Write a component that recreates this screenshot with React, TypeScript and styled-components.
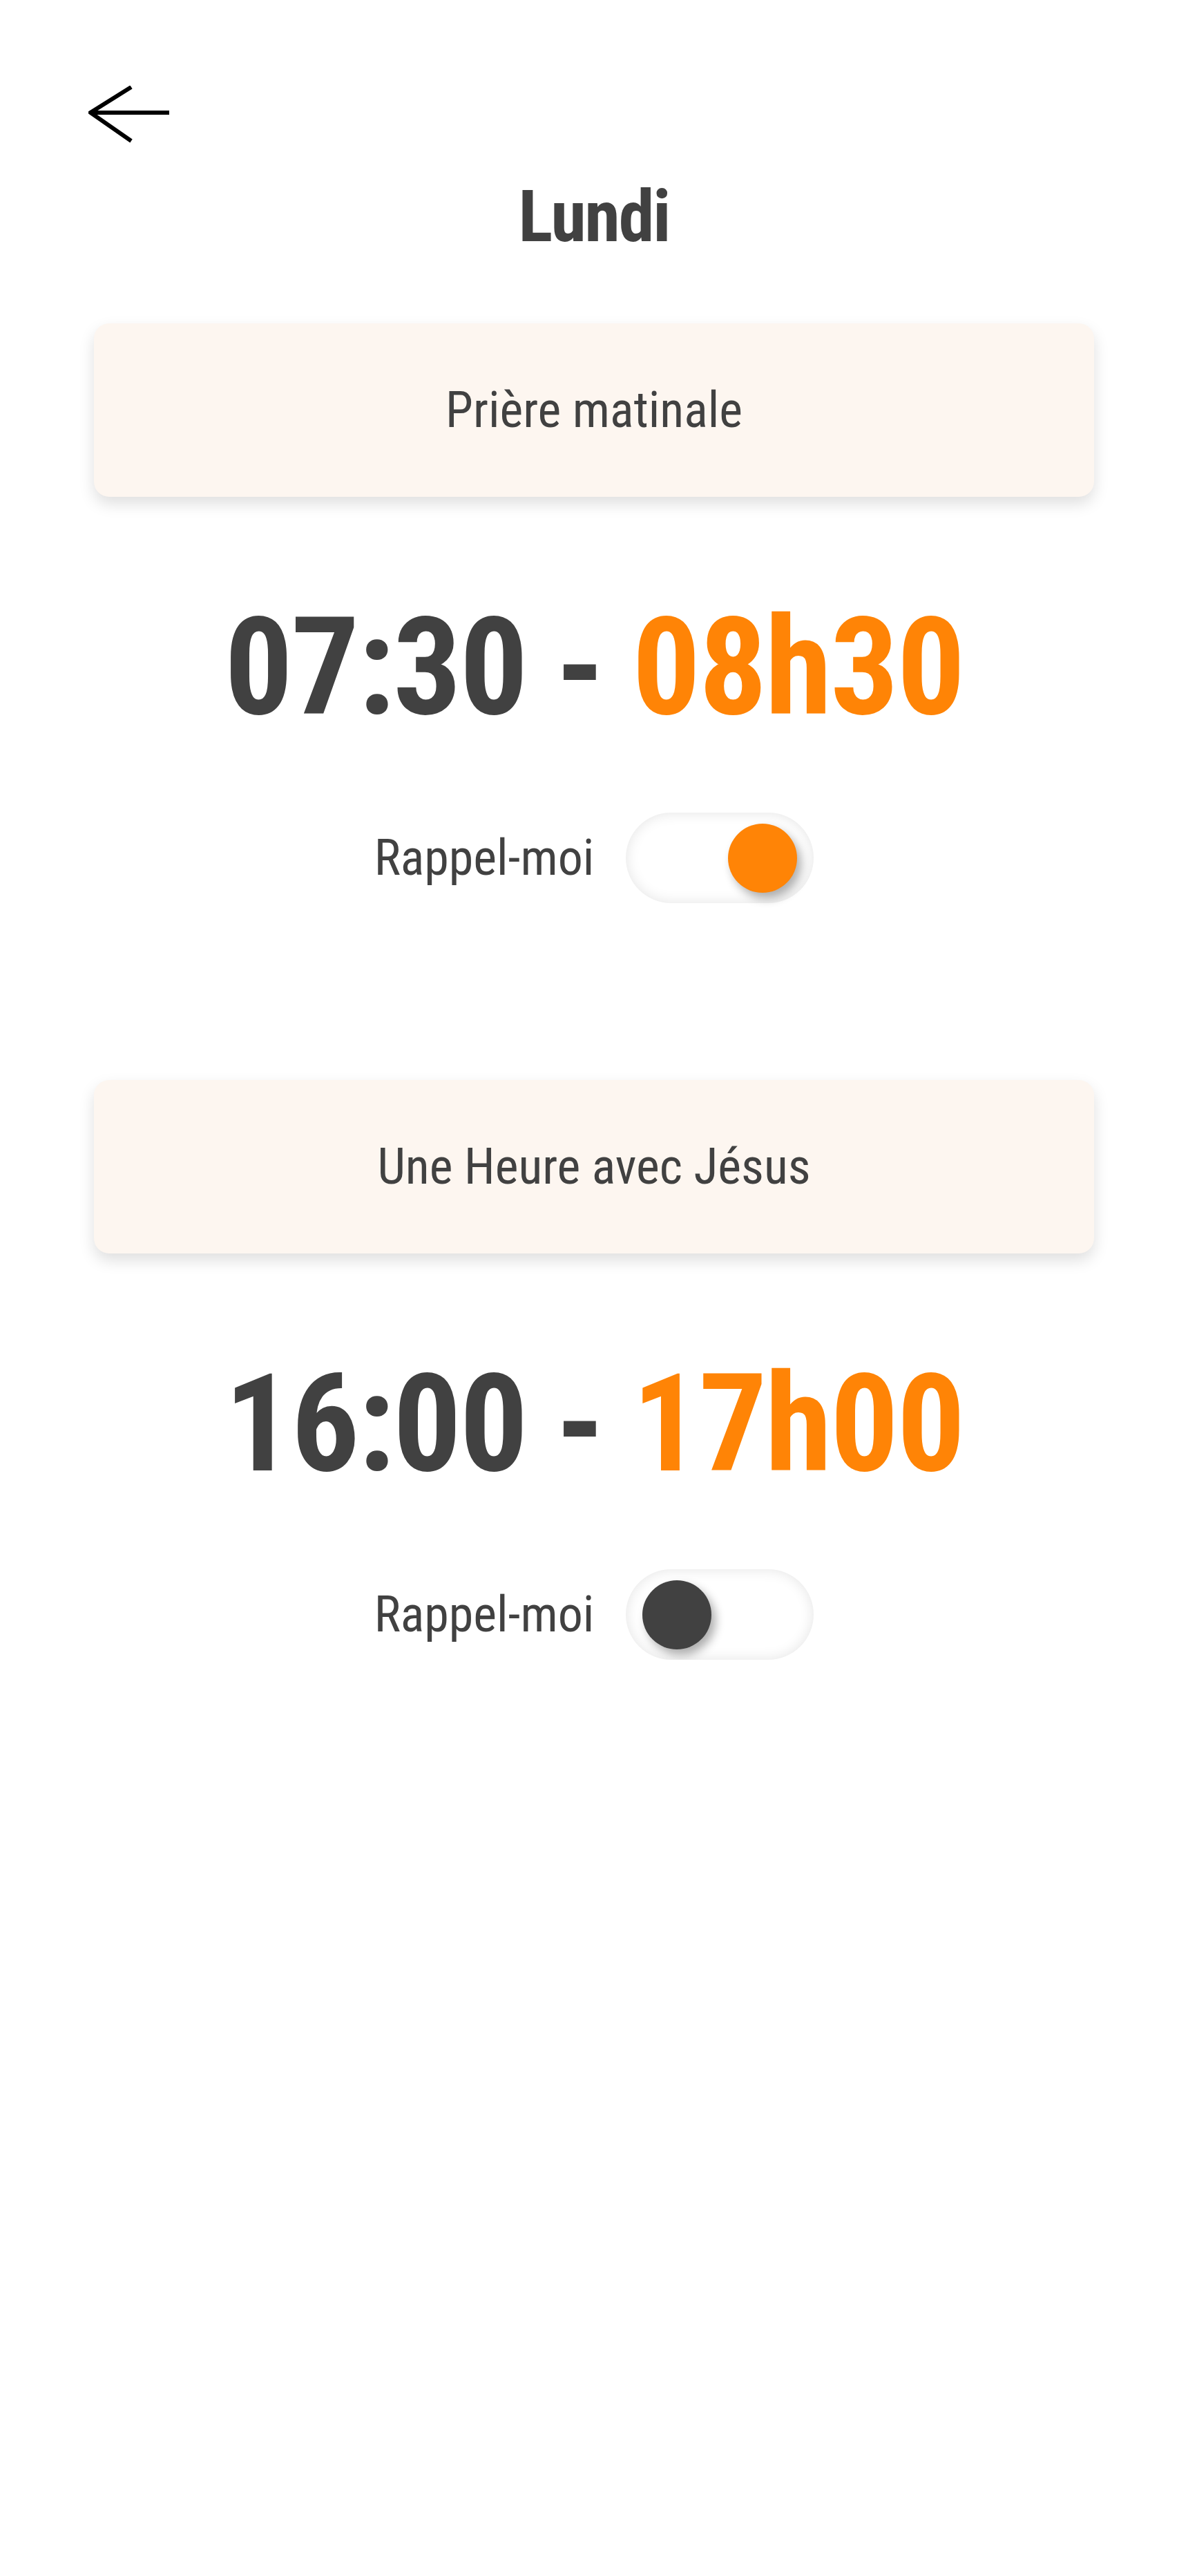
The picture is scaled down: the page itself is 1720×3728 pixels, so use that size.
import React, { useState } from 'react';
import styled, { createGlobalStyle } from 'styled-components';

const colors = {
    text: '#414141',
    orange: '#ff8406',
    card: '#fdf6f0',
    white: '#ffffff',
};

const GlobalStyle = createGlobalStyle`
    html, body {
        margin: 0;
        padding: 0;
        background: ${colors.white};
        font-family: Roboto, "Noto Sans", sans-serif;
        font-stretch: 85%;
        color: ${colors.text};
    }
`;

const Page = styled.div`
    padding-top: 124px;
    display: flex;
    flex-direction: column;
`;

const Header = styled.header`
    padding-left: 128px;
    height: 84px;
`;

const BackButton = styled.button`
    border: none;
    background: none;
    padding: 0;
    width: 120px;
    height: 84px;
    cursor: pointer;
    display: block;
`;

const Title = styled.h1`
    margin: 54px 0 0;
    text-align: center;
    font-size: 104px;
    line-height: 104px;
    font-weight: 700;
    letter-spacing: -2px;
    color: ${colors.text};
`;

const Sessions = styled.div`
    margin-top: 102px;
    padding: 0 136px;
    display: flex;
    flex-direction: column;
    gap: 256px;
`;

const Session = styled.section`
    display: flex;
    flex-direction: column;
    align-items: center;
`;

const Card = styled.div`
    align-self: stretch;
    height: 251px;
    border-radius: 22px;
    background: ${colors.card};
    box-shadow: 0 10px 22px rgba(0, 0, 0, 0.13);
    display: flex;
    align-items: center;
    justify-content: center;
    font-size: 72px;
    line-height: 72px;
    color: ${colors.text};
`;

const Time = styled.div`
    margin-top: 149px;
    font-size: 196px;
    line-height: 196px;
    font-weight: 700;
    letter-spacing: -2.6px;
    color: ${colors.text};
    white-space: pre;
`;

const End = styled.span`
    color: ${colors.orange};
`;

const ReminderRow = styled.div`
    margin-top: 112px;
    display: flex;
    align-items: center;
    gap: 46px;
`;

const Label = styled.span`
    font-size: 72px;
    line-height: 72px;
    color: ${colors.text};
`;

const Track = styled.button`
    position: relative;
    width: 272px;
    height: 131px;
    border: none;
    padding: 0;
    border-radius: 66px;
    background: ${colors.white};
    box-shadow: inset 0 0 20px rgba(0, 0, 0, 0.11);
    cursor: pointer;
`;

const Knob = styled.span<{ on: boolean }>`
    position: absolute;
    top: 16px;
    left: ${(props) => (props.on ? '148px' : '24px')};
    width: 100px;
    height: 100px;
    border-radius: 50%;
    background: ${(props) => (props.on ? colors.orange : colors.text)};
    box-shadow: 6px 8px 14px rgba(0, 0, 0, 0.32);
    transition: left 0.2s;
`;

interface SessionProps {
    name: string;
    start: string;
    end: string;
    reminder: boolean;
}

const ArrowBack: React.FC = () => (
    <svg width="120" height="84" viewBox="0 0 120 84">
        <polyline points="62,2 3,39 62,80" fill="none" stroke="#000" strokeWidth="6" />
        <line x1="4" y1="39" x2="117" y2="39" stroke="#000" strokeWidth="6" />
    </svg>
);

const SessionBlock: React.FC<SessionProps> = ({ name, start, end, reminder }) => {
    const [on, setOn] = useState(reminder);

    return (
        <Session>
            <Card>{name}</Card>
            <Time>
                {start} - <End>{end}</End>
            </Time>
            <ReminderRow>
                <Label>Rappel-moi</Label>
                <Track onClick={() => setOn(!on)} aria-pressed={on}>
                    <Knob on={on} />
                </Track>
            </ReminderRow>
        </Session>
    );
};

const App: React.FC = () => {
    return (
        <Page>
            <GlobalStyle />
            <Header>
                <BackButton aria-label="Retour">
                    <ArrowBack />
                </BackButton>
            </Header>
            <Title>Lundi</Title>
            <Sessions>
                <SessionBlock name="Prière matinale" start="07:30" end="08h30" reminder={true} />
                <SessionBlock name="Une Heure avec Jésus" start="16:00" end="17h00" reminder={false} />
            </Sessions>
        </Page>
    );
};

export default App;
